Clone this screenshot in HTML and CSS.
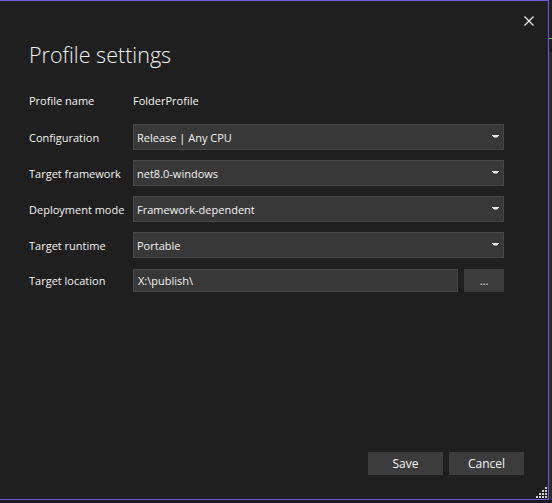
FILE: index.html
```html
<!DOCTYPE html>
<html>
<head>
<meta charset="utf-8">
<link rel="stylesheet" href="styles.css">
</head>
<body>
<div class="screen">
  <div class="dialog">
    <div class="titlebar">
      <svg class="close" width="10" height="10" viewBox="0 0 10 10"><path d="M0.5 0.5L9.5 9.5M9.5 0.5L0.5 9.5" stroke="#e8e8e8" stroke-width="1.3"/></svg>
    </div>
    <h1 class="title">Profile settings</h1>
    <div class="form">
      <div class="row row-static">
        <span class="label">Profile name</span>
        <span class="value">FolderProfile</span>
      </div>
      <div class="row">
        <span class="label">Configuration</span>
        <div class="select"><span>Release | Any CPU</span><svg class="arrow" width="7" height="4" viewBox="0 0 7 4"><path d="M0 0h7v1H0zM1 1h5v1H1z" fill="#e8e8e8"/><path d="M2 2h3v1H2z" fill="#9a9a9a"/></svg></div>
      </div>
      <div class="row">
        <span class="label">Target framework</span>
        <div class="select"><span>net8.0-windows</span><svg class="arrow" width="7" height="4" viewBox="0 0 7 4"><path d="M0 0h7v1H0zM1 1h5v1H1z" fill="#e8e8e8"/><path d="M2 2h3v1H2z" fill="#9a9a9a"/></svg></div>
      </div>
      <div class="row">
        <span class="label">Deployment mode</span>
        <div class="select"><span>Framework-dependent</span><svg class="arrow" width="7" height="4" viewBox="0 0 7 4"><path d="M0 0h7v1H0zM1 1h5v1H1z" fill="#e8e8e8"/><path d="M2 2h3v1H2z" fill="#9a9a9a"/></svg></div>
      </div>
      <div class="row">
        <span class="label">Target runtime</span>
        <div class="select"><span>Portable</span><svg class="arrow" width="7" height="4" viewBox="0 0 7 4"><path d="M0 0h7v1H0zM1 1h5v1H1z" fill="#e8e8e8"/><path d="M2 2h3v1H2z" fill="#9a9a9a"/></svg></div>
      </div>
      <div class="row row-loc">
        <span class="label">Target location</span>
        <div class="input">X:\publish\</div>
        <div class="browse">...</div>
      </div>
    </div>
    <div class="spacer"></div>
    <div class="footer">
      <div class="btn">Save</div>
      <div class="btn">Cancel</div>
    </div>
    <svg class="grip" width="11" height="11" viewBox="0 0 11 11"><g fill="#cfcfcf"><rect x="9" y="0" width="2" height="2"/><rect x="6" y="3" width="2" height="2"/><rect x="9" y="3" width="2" height="2"/><rect x="3" y="6" width="2" height="2"/><rect x="6" y="6" width="2" height="2"/><rect x="9" y="6" width="2" height="2"/><rect x="0" y="9" width="2" height="2"/><rect x="3" y="9" width="2" height="2"/><rect x="6" y="9" width="2" height="2"/><rect x="9" y="9" width="2" height="2"/></g></svg>
  </div>
  <div class="side">
    <div class="side-top"></div>
    <div class="side-line"></div>
    <div class="side-mid"></div>
    <div class="side-rest"></div>
  </div>
</div>
</body>
</html>
```
FILE: styles.css
```css
html, body {
  margin: 0;
  padding: 0;
  background: #1b1b1b;
}
.screen {
  display: flex;
  width: 552px;
  height: 503px;
  overflow: hidden;
}
.dialog {
  position: relative;
  width: 548px;
  height: 498px;
  background: #1f1f1f;
  border-top: 1px solid #6c5ce0;
  border-right: 1px solid #6c5ce0;
  border-bottom: 1px solid #6c5ce0;
  display: flex;
  flex-direction: column;
  font-family: "Segoe UI", "Open Sans", sans-serif;
  color: #f4f4f4;
  flex: none;
}
.side {
  width: 3px;
  display: flex;
  flex-direction: column;
}
.side-top { height: 38px; background: #1f1f1f; }
.side-line { height: 1px; background: #7bbf5a; }
.side-mid { height: 13px; background: #1f1f1f; }
.side-rest { height: 448px; background: #2b2b2b; }
.titlebar {
  height: 28px;
  display: flex;
  justify-content: flex-end;
  align-items: flex-start;
  padding-right: 14px;
}
.close {
  display: block;
  margin-top: 15px;
}
.title {
  margin: 10px 0 0 29px;
  font-size: 21.5px;
  font-weight: 300;
  color: #f1f1f1;
  line-height: 32px;
  height: 32px;
}
.form {
  margin: 16px 0 0 29px;
  display: flex;
  flex-direction: column;
  gap: 10px;
  font-size: 11px;
}
.row {
  display: grid;
  grid-template-columns: 104px 371px;
  align-items: center;
  height: 26px;
}
.row-static {
  margin-bottom: 1px;
}
.row-loc {
  grid-template-columns: 104px 325px 46px;
  height: 23px;
  margin-top: 1px;
}
.label {
  white-space: nowrap;
}
.select {
  box-sizing: border-box;
  height: 26px;
  background: #383838;
  border: 1px solid #474747;
  display: flex;
  align-items: center;
  justify-content: space-between;
  padding: 0 4px 0 3px;
}
.arrow {
  display: block;
}
.input {
  box-sizing: border-box;
  height: 23px;
  background: #383838;
  border: 1px solid #474747;
  padding-left: 4px;
  display: flex;
  align-items: center;
}
.browse {
  margin-left: 6px;
  height: 23px;
  background: #3c3c3c;
  display: flex;
  align-items: center;
  justify-content: center;
}
.spacer {
  flex: 1;
}
.footer {
  display: flex;
  justify-content: flex-end;
  gap: 6px;
  padding-right: 24px;
  margin-bottom: 24px;
  font-size: 12px;
}
.btn {
  width: 75px;
  height: 23px;
  background: #3c3c3c;
  display: flex;
  align-items: center;
  justify-content: center;
}
.grip {
  position: absolute;
  right: 1px;
  bottom: 1px;
}
```
